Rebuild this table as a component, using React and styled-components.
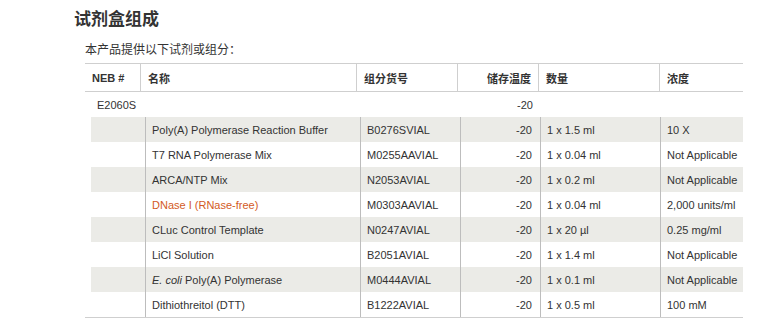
import React from "react";
import styled, { createGlobalStyle } from "styled-components";

const Global = createGlobalStyle`
  html, body { margin: 0; padding: 0; background: #fff; }
  body { font-family: "Liberation Sans", Arial, "Noto Sans CJK SC", sans-serif; color: #333; }
`;

const Page = styled.div`
  padding: 6px 0 0 74px;
  width: 765px;
  box-sizing: border-box;
`;

const Title = styled.h2`
  margin: 0;
  font-family: "Noto Sans CJK SC", sans-serif;
  font-size: 17px;
  line-height: 24px;
  font-weight: 700;
  color: #333;
`;

const Intro = styled.p`
  margin: 10px 0 0 11px;
  font-family: "Noto Sans CJK SC", sans-serif;
  font-size: 12px;
  line-height: 18px;
  color: #333;
`;

const Table = styled.div`
  margin: 5px 0 0 11px;
  width: 658px;
  border-top: 1px solid #cfcfcf;
  border-bottom: 1px solid #cfcfcf;
`;

const headCols = "56px 216px 101px 81px 121px 83px";
const bodyCols = "55px 215px 100px 80px 120px 82px";

const HeadRow = styled.div`
  display: grid;
  grid-template-columns: ${headCols};
  height: 27px;
  border-bottom: 1px solid #cfcfcf;
`;

const HeadCell = styled.div`
  display: flex;
  align-items: center;
  justify-content: ${(p) => (p.$right ? "flex-end" : "flex-start")};
  padding: ${(p) => (p.$right ? "0 7px 0 0" : "0 0 0 7px")};
  font-family: "Liberation Sans", Arial, "Noto Sans CJK SC", sans-serif;
  font-size: 11px;
  font-weight: 700;
  color: #333;
  border-right: ${(p) => (p.$last ? "none" : "1px solid #cfcfcf")};
`;

const KitRow = styled.div`
  display: grid;
  grid-template-columns: ${headCols};
  height: 25px;
  font-size: 11px;
`;

const KitCell = styled.div`
  display: flex;
  align-items: center;
  justify-content: ${(p) => (p.$right ? "flex-end" : "flex-start")};
  padding: ${(p) => (p.$right ? "0 6px 0 0" : "0 0 0 12px")};
`;

const Body = styled.div`
  margin-left: 6px;
`;

const Row = styled.div`
  display: grid;
  grid-template-columns: ${bodyCols};
  height: 25px;
  background: ${(p) => (p.$shade ? "#ebebe7" : "#fff")};
`;

const Cell = styled.div`
  display: flex;
  align-items: center;
  justify-content: ${(p) => (p.$right ? "flex-end" : "flex-start")};
  padding: ${(p) => (p.$right ? "0 8px 0 0" : "0 0 0 6px")};
  font-size: 11px;
  color: #333;
  white-space: nowrap;
  border-right: ${(p) => (p.$last ? "none" : "1px solid #bdbdbd")};
`;

const Link = styled.a`
  color: #d35a1e;
  text-decoration: none;
`;

const rows = [
  { name: "Poly(A) Polymerase Reaction Buffer", cat: "B0276SVIAL", qty: "1 x 1.5 ml", conc: "10 X" },
  { name: "T7 RNA Polymerase Mix", cat: "M0255AAVIAL", qty: "1 x 0.04 ml", conc: "Not Applicable" },
  { name: "ARCA/NTP Mix", cat: "N2053AVIAL", qty: "1 x 0.2 ml", conc: "Not Applicable" },
  { name: <Link href="#">DNase I (RNase-free)</Link>, cat: "M0303AAVIAL", qty: "1 x 0.04 ml", conc: "2,000 units/ml" },
  { name: "CLuc Control Template", cat: "N0247AVIAL", qty: "1 x 20 µl", conc: "0.25 mg/ml" },
  { name: "LiCl Solution", cat: "B2051AVIAL", qty: "1 x 1.4 ml", conc: "Not Applicable" },
  { name: <><i>E. coli</i>&nbsp;Poly(A) Polymerase</>, cat: "M0444AVIAL", qty: "1 x 0.1 ml", conc: "Not Applicable" },
  { name: "Dithiothreitol (DTT)", cat: "B1222AVIAL", qty: "1 x 0.5 ml", conc: "100 mM" },
];

export default function App() {
  return (
    <Page>
      <Global />
      <Title>试剂盒组成</Title>
      <Intro>本产品提供以下试剂或组分：</Intro>
      <Table>
        <HeadRow>
          <HeadCell>NEB #</HeadCell>
          <HeadCell>名称</HeadCell>
          <HeadCell>组分货号</HeadCell>
          <HeadCell $right>储存温度</HeadCell>
          <HeadCell>数量</HeadCell>
          <HeadCell $last>浓度</HeadCell>
        </HeadRow>
        <KitRow>
          <KitCell>E2060S</KitCell>
          <KitCell />
          <KitCell />
          <KitCell $right>-20</KitCell>
          <KitCell />
          <KitCell />
        </KitRow>
        <Body>
          {rows.map((r, i) => (
            <Row key={i} $shade={i % 2 === 0}>
              <Cell />
              <Cell>{r.name}</Cell>
              <Cell>{r.cat}</Cell>
              <Cell $right>-20</Cell>
              <Cell>{r.qty}</Cell>
              <Cell $last>{r.conc}</Cell>
            </Row>
          ))}
        </Body>
      </Table>
    </Page>
  );
}
